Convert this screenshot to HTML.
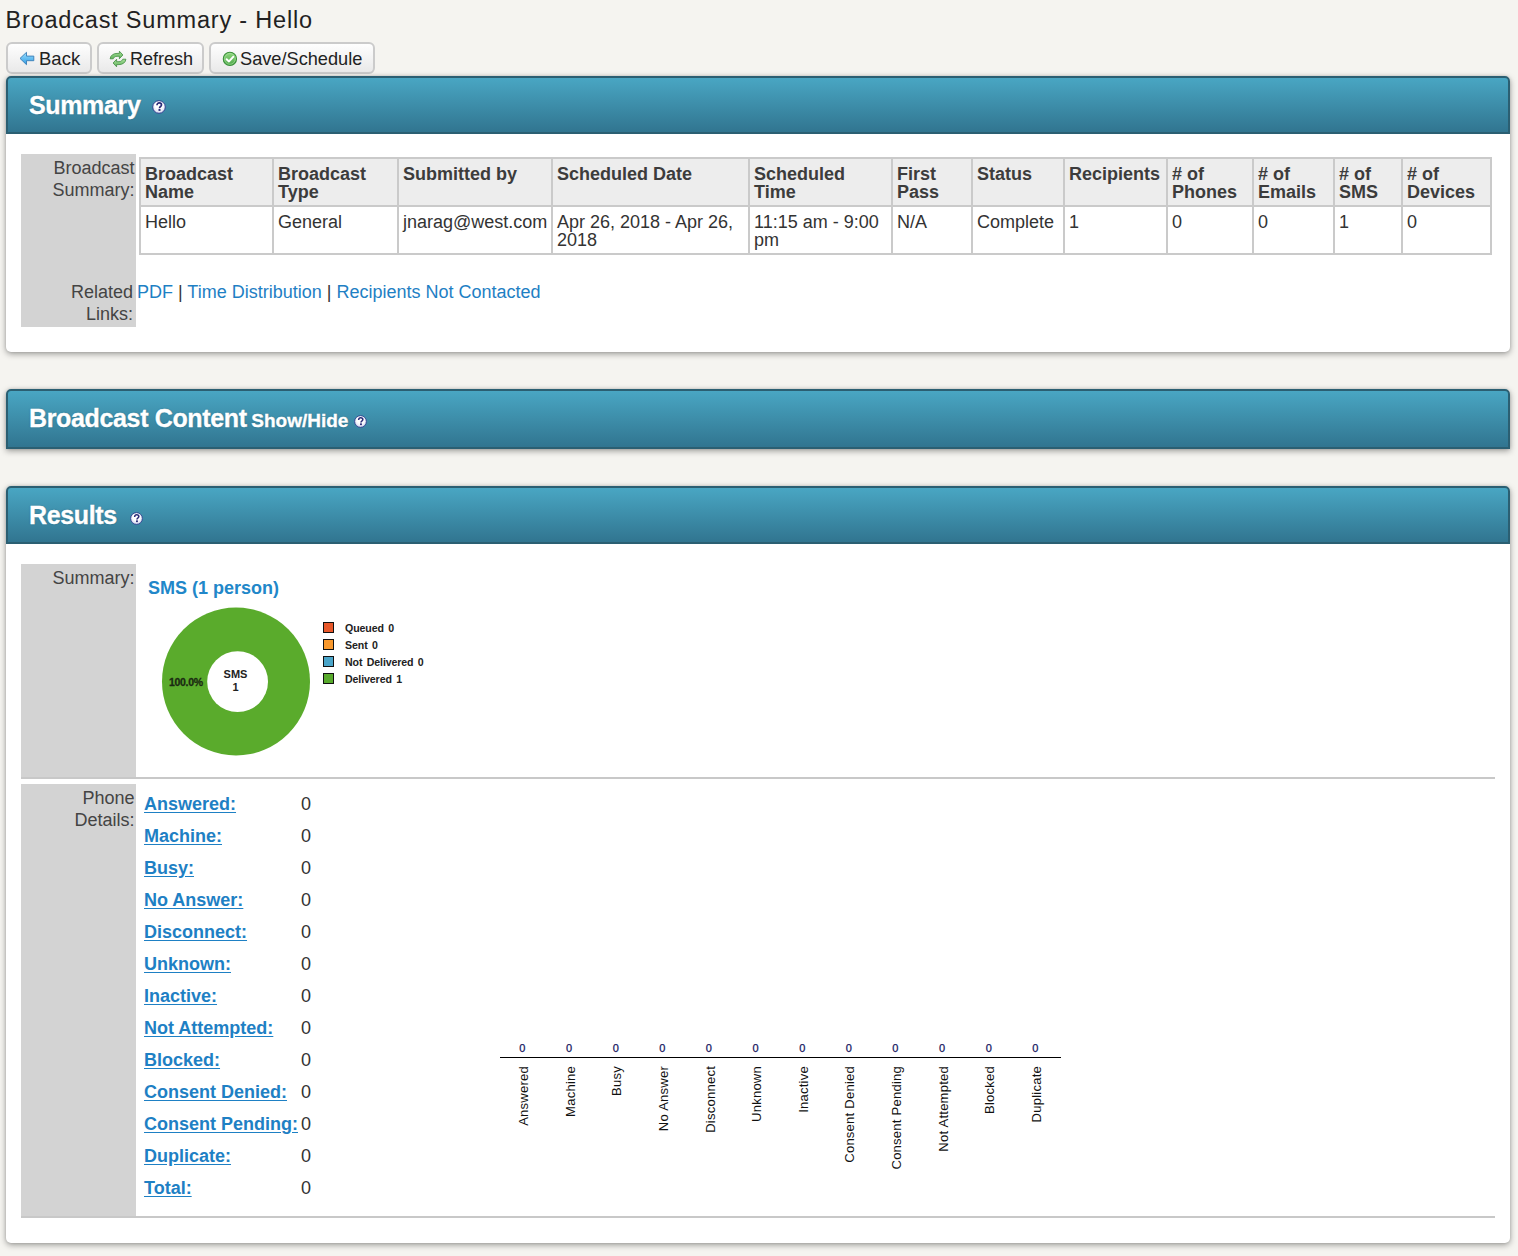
<!DOCTYPE html>
<html><head><meta charset="utf-8">
<style>
*{box-sizing:border-box;margin:0;padding:0}
html,body{width:1518px;height:1256px;overflow:hidden}
body{background:#f5f4f0;font-family:"Liberation Sans",sans-serif;font-size:18px;color:#333;position:relative}
.abs{position:absolute}
h1{position:absolute;left:5.5px;top:5px;font-size:23.5px;letter-spacing:0.8px;font-weight:normal;color:#222;white-space:nowrap;line-height:30px}
.btn{position:absolute;top:42px;height:32px;border:2px solid #cbcbcb;border-radius:6px;background:linear-gradient(#fefefe,#e9e9e9);color:#222;font-size:18px;line-height:28px;white-space:nowrap}
.btn span{position:absolute;top:1px;font-size:18.5px}
.btn svg{position:absolute}
.panel{position:absolute;left:6px;width:1504px;background:#fff;border-radius:5px;box-shadow:0 2px 6px rgba(0,0,0,.36),0 0 3px rgba(0,0,0,.12)}
.hdr{position:absolute;left:0;top:0;width:1504px;height:58px;border:2px solid #2b5f72;border-bottom-width:2px;border-radius:5px 5px 0 0;background:linear-gradient(#49a6c3,#317590)}
.hdr .t{position:absolute;left:21px;top:12.5px;letter-spacing:-0.35px;font-size:25px;font-weight:bold;color:#fff;line-height:28px;white-space:nowrap;text-shadow:0 0 1.5px rgba(0,40,60,.45);-webkit-text-stroke:0.35px #fff}
.help{position:absolute;width:14px;height:14px}
.lab{position:absolute;left:15px;width:115px;background:#d3d3d3;color:#444;text-align:right;line-height:22px;padding-right:1.5px;padding-top:2.5px}
table.sum{position:absolute;left:133px;top:81px;width:1352px;border-collapse:collapse;table-layout:fixed}
table.sum td,table.sum th{border:2px solid #cacaca;padding:6px 4px 4px 4px;line-height:18px;text-align:left;vertical-align:top;white-space:nowrap;overflow:visible}
table.sum th{background:#ededed;font-weight:bold;color:#3c3c3c}
table.sum td{color:#333}
a{color:#1e80c4;text-decoration:none}
.pd{position:absolute;left:138px;font-weight:bold;line-height:22px}
.pd a{text-decoration:underline;text-underline-offset:2px}
.pv{position:absolute;left:295px;line-height:22px}
.xl{position:absolute;font-size:13px;color:#111;white-space:nowrap;transform-origin:0 0;transform:rotate(-90deg);letter-spacing:0.25px;line-height:13px}
.zl{position:absolute;font-size:11px;color:#16165e;-webkit-text-stroke:0.25px #16165e;width:20px;text-align:center;line-height:11px}
.lg{position:absolute;left:317px;width:11px;height:11px;border:1px solid #111}
.lt{position:absolute;left:339px;margin-top:0.8px;letter-spacing:-0.1px;word-spacing:1.5px;font-size:10.6px;font-weight:bold;color:#222;line-height:11px;white-space:nowrap}
</style></head>
<body>
<h1>Broadcast Summary - Hello</h1>

<div class="btn" style="left:6px;width:86px">
  <svg style="left:11px;top:7px" width="16" height="15" viewBox="0 0 16 15"><defs><linearGradient id="gb" x1="0" y1="0" x2="0" y2="1"><stop offset="0" stop-color="#9be0ff"/><stop offset="1" stop-color="#2f9be3"/></linearGradient></defs><path d="M1 7.4 L7.5 1.3 L7.5 5.1 L14.8 5.1 L14.8 9.7 L7.5 9.7 L7.5 13.7 Z" fill="url(#gb)" stroke="#3a7db5" stroke-width="0.9" stroke-linejoin="round"/></svg>
  <span style="left:31px">Back</span>
</div>
<div class="btn" style="left:97px;width:107px;--x:0">
  <svg style="left:10px;top:6px" width="18" height="18" viewBox="0 0 18 18"><defs><linearGradient id="gr" x1="0" y1="0" x2="0" y2="1"><stop offset="0" stop-color="#a6df98"/><stop offset="1" stop-color="#62b45e"/></linearGradient></defs><path d="M1.1 8.8 C1.5 5.3 4.5 3.4 8 3.4 L10.4 3.4 L10.4 1.2 L13.9 5 L10.4 8.7 L10.4 6.3 L8 6.3 C6 6.3 4.8 7.5 4.2 8.8 Z" fill="url(#gr)" stroke="#3f8a3f" stroke-width="0.8" stroke-linejoin="round"/><path d="M16.9 9.2 C16.5 12.7 13.5 14.6 10 14.6 L7.6 14.6 L7.6 16.8 L4.1 13 L7.6 9.3 L7.6 11.7 L10 11.7 C12 11.7 13.2 10.5 13.8 9.2 Z" fill="url(#gr)" stroke="#3f8a3f" stroke-width="0.8" stroke-linejoin="round"/></svg>
  <span style="left:31px;font-size:18px">Refresh</span>
</div>
<div class="btn" style="left:209px;width:166px">
  <svg style="left:10px;top:6px" width="18" height="18" viewBox="0 0 18 18"><defs><linearGradient id="gc" x1="0" y1="0" x2="0" y2="1"><stop offset="0" stop-color="#8fd67e"/><stop offset="1" stop-color="#4ea84a"/></linearGradient></defs><circle cx="8.9" cy="8.9" r="6.6" fill="url(#gc)" stroke="#3a8f3a" stroke-width="1.1"/><circle cx="8.9" cy="8.9" r="5.4" fill="none" stroke="#b8ecae" stroke-width="0.6" opacity="0.8"/><path d="M5.6 9.2 L8 11.4 L12.2 6.8" fill="none" stroke="#fff" stroke-width="2" stroke-linecap="round" stroke-linejoin="round"/></svg>
  <span style="left:29px;font-size:18.2px">Save/Schedule</span>
</div>

<!-- SUMMARY PANEL -->
<div class="panel" style="top:76px;height:276px">
  <div class="hdr"><div class="t" style="top:13px">Summary</div><div class="help" style="left:144px;top:22px"><svg width="100%" height="100%" viewBox="0 0 14 14" style="position:absolute;left:0;top:0"><defs><radialGradient id="hg" cx="0.5" cy="0.35" r="0.6"><stop offset="0.5" stop-color="#fff"/><stop offset="1" stop-color="#d9dbf0"/></radialGradient></defs><circle cx="7" cy="7" r="6.3" fill="url(#hg)" stroke="#2f4190" stroke-width="1"/><path d="M5 5.3 C5 3.7 6 2.9 7.2 2.9 C8.5 2.9 9.5 3.7 9.5 4.9 C9.5 6.4 7.5 6.6 7.5 8.2" fill="none" stroke="#2b2c78" stroke-width="1.7"/><rect x="6.5" y="9" width="2" height="1.9" fill="#2b2c78"/></svg></div></div>
  <div class="lab" style="top:78px;height:173px">Broadcast<br>Summary:<div style="position:absolute;right:3px;top:127px">Related<br>Links:</div></div>
  <table class="sum">
    <colgroup><col style="width:133px"><col style="width:125px"><col style="width:154px"><col style="width:197px"><col style="width:143px"><col style="width:80px"><col style="width:92px"><col style="width:103px"><col style="width:86px"><col style="width:81px"><col style="width:68px"><col style="width:89px"></colgroup>
    <tr style="height:48px"><th>Broadcast<br>Name</th><th>Broadcast<br>Type</th><th>Submitted by</th><th>Scheduled Date</th><th>Scheduled<br>Time</th><th>First<br>Pass</th><th>Status</th><th>Recipients</th><th># of<br>Phones</th><th># of<br>Emails</th><th># of<br>SMS</th><th># of<br>Devices</th></tr>
    <tr style="height:48px"><td>Hello</td><td>General</td><td>jnarag@west.com</td><td>Apr 26, 2018 - Apr 26,<br>2018</td><td>11:15 am - 9:00<br>pm</td><td>N/A</td><td>Complete</td><td>1</td><td>0</td><td>0</td><td>1</td><td>0</td></tr>
  </table>
  <div class="abs" style="left:131px;top:204.5px;line-height:22px;white-space:nowrap"><a>PDF</a> | <a>Time Distribution</a> | <a>Recipients Not Contacted</a></div>
</div>

<!-- BROADCAST CONTENT -->
<div class="panel" style="top:389px;height:60px;border-radius:5px 5px 0 0">
  <div class="hdr" style="height:60px"><div class="t">Broadcast Content <span style="font-size:19px;letter-spacing:0;margin-left:-2px">Show/Hide</span></div><div class="help" style="left:346px;top:24px;width:13px;height:13px;font-size:10px;line-height:11px"><svg width="100%" height="100%" viewBox="0 0 14 14" style="position:absolute;left:0;top:0"><defs><radialGradient id="hg" cx="0.5" cy="0.35" r="0.6"><stop offset="0.5" stop-color="#fff"/><stop offset="1" stop-color="#d9dbf0"/></radialGradient></defs><circle cx="7" cy="7" r="6.3" fill="url(#hg)" stroke="#2f4190" stroke-width="1"/><path d="M5 5.3 C5 3.7 6 2.9 7.2 2.9 C8.5 2.9 9.5 3.7 9.5 4.9 C9.5 6.4 7.5 6.6 7.5 8.2" fill="none" stroke="#2b2c78" stroke-width="1.7"/><rect x="6.5" y="9" width="2" height="1.9" fill="#2b2c78"/></svg></div></div>
</div>

<!-- RESULTS -->
<div class="panel" style="top:486px;height:757px">
  <div class="hdr"><div class="t">Results</div><div class="help" style="left:122px;top:24px;width:13px;height:13px;font-size:10px;line-height:11px"><svg width="100%" height="100%" viewBox="0 0 14 14" style="position:absolute;left:0;top:0"><defs><radialGradient id="hg" cx="0.5" cy="0.35" r="0.6"><stop offset="0.5" stop-color="#fff"/><stop offset="1" stop-color="#d9dbf0"/></radialGradient></defs><circle cx="7" cy="7" r="6.3" fill="url(#hg)" stroke="#2f4190" stroke-width="1"/><path d="M5 5.3 C5 3.7 6 2.9 7.2 2.9 C8.5 2.9 9.5 3.7 9.5 4.9 C9.5 6.4 7.5 6.6 7.5 8.2" fill="none" stroke="#2b2c78" stroke-width="1.7"/><rect x="6.5" y="9" width="2" height="1.9" fill="#2b2c78"/></svg></div></div>
  <div class="lab" style="top:78px;height:213px">Summary:</div>
  <div class="abs" style="left:15px;top:291px;width:1474px;height:2px;background:#c8c8c8"></div>
  <div class="abs" style="left:142px;top:91px;font-weight:bold;color:#2187c9;line-height:22px;white-space:nowrap">SMS (1 person)</div>
  <svg class="abs" style="left:150px;top:115px" width="160" height="160" viewBox="0 0 160 160">
    <circle cx="80" cy="80.5" r="74" fill="#5aab2c"/>
    <circle cx="81.6" cy="80.7" r="30.4" fill="#fff"/>
    <text x="79.5" y="77" font-family="Liberation Sans" font-weight="bold" font-size="11" fill="#222" text-anchor="middle">SMS</text>
    <text x="79.5" y="90" font-family="Liberation Sans" font-weight="bold" font-size="11" fill="#222" text-anchor="middle">1</text>
    <text x="13" y="85" font-family="Liberation Sans" font-weight="bold" font-size="10.5" fill="#1a2a12" stroke="#1a2a12" stroke-width="0.3" letter-spacing="-0.3">100.0%</text>
  </svg>
  <div class="lg" style="top:136px;background:#e8582a"></div><div class="lt" style="top:136px">Queued 0</div>
  <div class="lg" style="top:153px;background:#f8982c"></div><div class="lt" style="top:153px">Sent 0</div>
  <div class="lg" style="top:170px;background:#4aa5c9"></div><div class="lt" style="top:170px">Not Delivered 0</div>
  <div class="lg" style="top:187px;background:#58aa2c"></div><div class="lt" style="top:187px">Delivered 1</div>

  <div class="lab" style="top:298px;height:432px">Phone<br>Details:</div>
  <div class="abs" style="left:15px;top:730px;width:1474px;height:2px;background:#c8c8c8"></div>
  <div class="pd" style="top:307.1px"><a>Answered:</a></div><div class="pv" style="top:307.1px">0</div>
  <div class="pd" style="top:339.1px"><a>Machine:</a></div><div class="pv" style="top:339.1px">0</div>
  <div class="pd" style="top:371.1px"><a>Busy:</a></div><div class="pv" style="top:371.1px">0</div>
  <div class="pd" style="top:403.1px"><a>No Answer:</a></div><div class="pv" style="top:403.1px">0</div>
  <div class="pd" style="top:435.1px"><a>Disconnect:</a></div><div class="pv" style="top:435.1px">0</div>
  <div class="pd" style="top:467.1px"><a>Unknown:</a></div><div class="pv" style="top:467.1px">0</div>
  <div class="pd" style="top:499.1px"><a>Inactive:</a></div><div class="pv" style="top:499.1px">0</div>
  <div class="pd" style="top:531.1px"><a>Not Attempted:</a></div><div class="pv" style="top:531.1px">0</div>
  <div class="pd" style="top:563.1px"><a>Blocked:</a></div><div class="pv" style="top:563.1px">0</div>
  <div class="pd" style="top:595.1px"><a>Consent Denied:</a></div><div class="pv" style="top:595.1px">0</div>
  <div class="pd" style="top:627.1px"><a>Consent Pending:</a></div><div class="pv" style="top:627.1px">0</div>
  <div class="pd" style="top:659.1px"><a>Duplicate:</a></div><div class="pv" style="top:659.1px">0</div>
  <div class="pd" style="top:691.1px"><a>Total:</a></div><div class="pv" style="top:691.1px">0</div>
  <div class="abs" style="left:494px;top:571px;width:561px;height:1px;background:#000"></div>
    <div class="zl" style="left:506.4px;top:556.7px">0</div>
  <div class="xl" style="left:511.0px;top:730px;width:150px;text-align:right">Answered</div>
  <div class="zl" style="left:553.0px;top:556.7px">0</div>
  <div class="xl" style="left:557.6px;top:730px;width:150px;text-align:right">Machine</div>
  <div class="zl" style="left:599.7px;top:556.7px">0</div>
  <div class="xl" style="left:604.3px;top:730px;width:150px;text-align:right">Busy</div>
  <div class="zl" style="left:646.3px;top:556.7px">0</div>
  <div class="xl" style="left:650.9px;top:730px;width:150px;text-align:right">No Answer</div>
  <div class="zl" style="left:692.9px;top:556.7px">0</div>
  <div class="xl" style="left:697.5px;top:730px;width:150px;text-align:right">Disconnect</div>
  <div class="zl" style="left:739.5px;top:556.7px">0</div>
  <div class="xl" style="left:744.1px;top:730px;width:150px;text-align:right">Unknown</div>
  <div class="zl" style="left:786.2px;top:556.7px">0</div>
  <div class="xl" style="left:790.8px;top:730px;width:150px;text-align:right">Inactive</div>
  <div class="zl" style="left:832.8px;top:556.7px">0</div>
  <div class="xl" style="left:837.4px;top:730px;width:150px;text-align:right">Consent Denied</div>
  <div class="zl" style="left:879.4px;top:556.7px">0</div>
  <div class="xl" style="left:884.0px;top:730px;width:150px;text-align:right">Consent Pending</div>
  <div class="zl" style="left:926.1px;top:556.7px">0</div>
  <div class="xl" style="left:930.7px;top:730px;width:150px;text-align:right">Not Attempted</div>
  <div class="zl" style="left:972.7px;top:556.7px">0</div>
  <div class="xl" style="left:977.3px;top:730px;width:150px;text-align:right">Blocked</div>
  <div class="zl" style="left:1019.3px;top:556.7px">0</div>
  <div class="xl" style="left:1023.9px;top:730px;width:150px;text-align:right">Duplicate</div>
</div>
</body></html>
